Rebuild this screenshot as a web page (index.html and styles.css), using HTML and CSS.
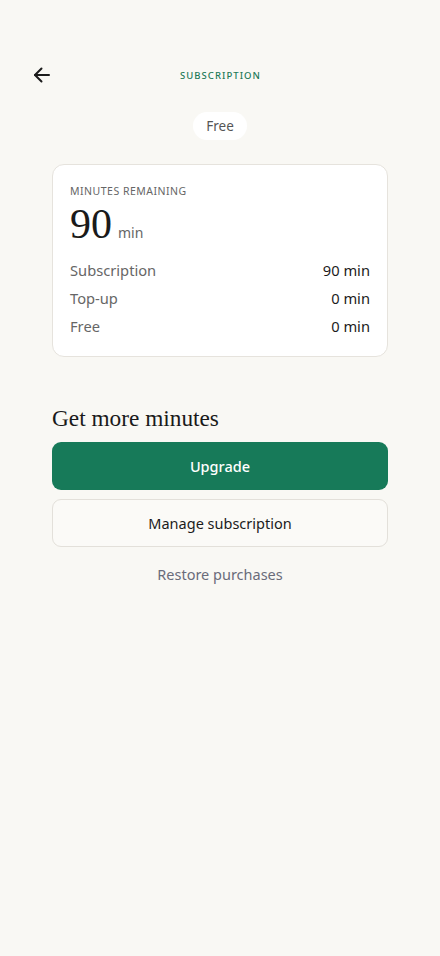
FILE: index.html
```html
<!DOCTYPE html>
<html>
<head>
<meta charset="utf-8">
<link rel="stylesheet" href="styles.css">
</head>
<body>
<div class="page">
  <header class="topbar">
    <button class="back" aria-label="Back">
      <svg width="20" height="20" viewBox="0 0 20 20" fill="none" stroke="#1c1c1c" stroke-width="2" stroke-linecap="round" stroke-linejoin="round"><path d="M17 10H3"/><path d="M9.5 3.5L3 10l6.5 6.5"/></svg>
    </button>
    <div class="title">SUBSCRIPTION</div>
    <div class="spacer"></div>
  </header>
  <div class="plan-row"><span class="pill">Free</span></div>
  <main class="content">
    <section class="card">
      <div class="label">MINUTES REMAINING</div>
      <div class="total"><span class="big">90</span><span class="unit">min</span></div>
      <div class="rows">
        <div class="row"><span class="k">Subscription</span><span class="v">90 min</span></div>
        <div class="row"><span class="k">Top-up</span><span class="v">0 min</span></div>
        <div class="row"><span class="k">Free</span><span class="v">0 min</span></div>
      </div>
    </section>
    <h2 class="section-title">Get more minutes</h2>
    <button class="btn primary">Upgrade</button>
    <button class="btn secondary">Manage subscription</button>
    <button class="link">Restore purchases</button>
  </main>
</div>
</body>
</html>
```
FILE: styles.css
```css
* { box-sizing: border-box; }
html, body { margin: 0; padding: 0; }
body {
  background: #f9f8f4;
  font-family: "Noto Sans", "Open Sans", sans-serif;
  color: #1c1c1c;
  width: 440px;
  min-height: 956px;
}
.page { padding-top: 55px; }
.topbar {
  display: flex;
  align-items: center;
  justify-content: space-between;
  padding: 0 30px;
  height: 40px;
}
.back {
  width: 24px; height: 24px;
  border: none; background: transparent; padding: 0;
  display: flex; align-items: center; justify-content: center;
}
.spacer { width: 24px; }
.title {
  font-size: 9.5px;
  letter-spacing: 1.05px;
  color: #1e7a58;
  font-weight: 500;
  padding-left: 1px;
}
.plan-row {
  display: flex; justify-content: center;
  margin-top: 17px;
}
.pill {
  display: inline-block;
  background: #ffffff;
  border-radius: 14px;
  padding: 4px 13px;
  font-size: 13.5px;
  color: #555;
  line-height: 20px;
}
.content {
  padding: 0 52px;
  margin-top: 24px;
  display: flex; flex-direction: column;
}
.card {
  background: #fff;
  border: 1px solid #e6e3dd;
  border-radius: 12px;
  padding: 19px 17px 16px;
}
.label {
  font-size: 10.5px;
  letter-spacing: 0.5px;
  color: #666;
  line-height: 14px;
}
.total {
  display: flex; align-items: baseline;
  margin-top: 2px;
}
.big {
  font-family: "Liberation Serif", "DejaVu Serif", serif;
  font-size: 42px;
  line-height: 48px;
  color: #1a1a1a;
}
.unit {
  font-size: 14px;
  color: #666;
  margin-left: 6px;
}
.rows { margin-top: 8px; display: flex; flex-direction: column; }
.row {
  display: flex; justify-content: space-between; align-items: center;
  height: 28px;
  font-size: 14.7px;
}
.k { color: #666; }
.v { color: #1c1c1c; }
.section-title {
  font-family: "Liberation Serif", "DejaVu Serif", serif;
  font-weight: 400;
  font-size: 23.3px;
  margin: 47px 0 10px;
  line-height: 28px;
  color: #1a1a1a;
}
.btn {
  font-family: inherit;
  height: 48px;
  border-radius: 9px;
  font-size: 14.5px;
  width: 100%;
  margin-bottom: 9px;
}
.primary {
  background: #177a59;
  color: #fff;
  border: none;
  font-weight: 500;
}
.secondary {
  background: #fbfaf7;
  border: 1px solid #e3e0da;
  color: #1c1c1c;
}
.link {
  font-family: inherit;
  background: none; border: none;
  font-size: 14.5px;
  color: #6a6c7a;
  margin-top: 6px;
  height: 24px;
}
```
